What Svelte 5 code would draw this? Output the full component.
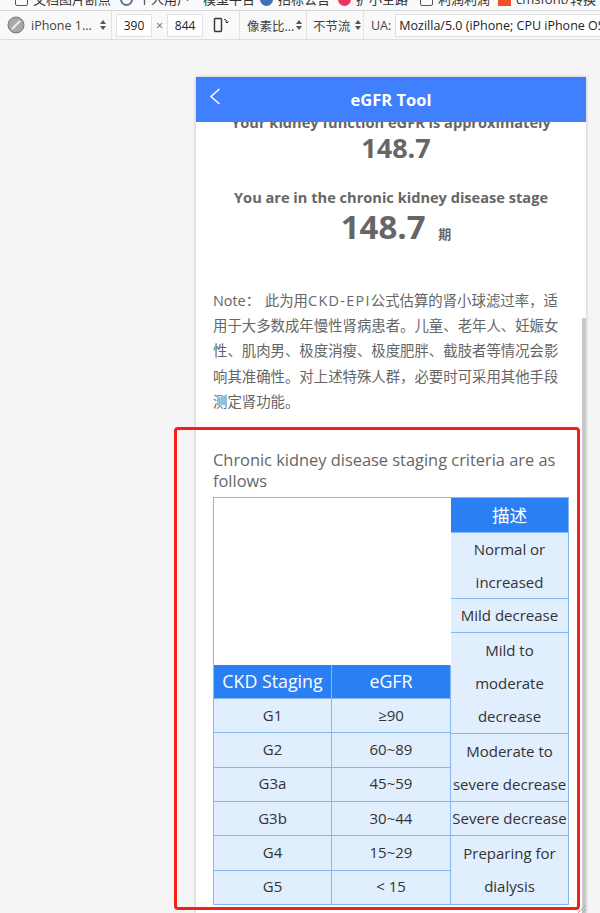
<script>
  const stages = [
    ['G1', '≥90'],
    ['G2', '60~89'],
    ['G3a', '45~59'],
    ['G3b', '30~44'],
    ['G4', '15~29'],
    ['G5', '< 15']
  ]

  const descriptions = [
    { text: 'Normal or increased', height: 66 },
    { text: 'Mild decrease', height: 34 },
    { text: 'Mild to moderate decrease', height: 101 },
    { text: 'Moderate to severe decrease', height: 68 },
    { text: 'Severe decrease', height: 34 },
    { text: 'Preparing for dialysis', height: 68 }
  ]

  const bookmarks = [
    { text: '文档图片断点', icon: 'rect', width: 105 },
    { text: '个人用户', icon: 'ring', width: 78 },
    { text: '模型平台', icon: 'none', width: 62 },
    { text: '招标公告', icon: 'blue', width: 78 },
    { text: '扩小空路', icon: 'pink', width: 82 },
    { text: '利润利润', icon: 'rect', width: 78 },
    { text: 'cmsfont/转换', icon: 'orange', width: 100 }
  ]
</script>

<div class="page">
  <div class="bookmarks">
    {#each bookmarks as mark}
      <span class="bookmark" style="width: {mark.width}px"><i class="mark {mark.icon}"></i>{mark.text}</span>
    {/each}
  </div>

  <div class="toolbar">
    <div class="group device">
      <svg class="no-icon" width="18" height="18" viewBox="0 0 18 18">
        <circle cx="9" cy="9" r="8" fill="#a8a8a8" stroke="#777" stroke-width="1" />
        <path d="M5 13 13 5" stroke="#eee" stroke-width="2" />
      </svg>
      <span class="label">iPhone 1...</span>
      <span class="updown"></span>
    </div>
    <div class="group size">
      <span class="box">390</span>
      <span class="times">×</span>
      <span class="box">844</span>
      <svg class="rotate" width="18" height="18" viewBox="0 0 18 18" fill="none" stroke="#333">
        <rect x="1.5" y="2.5" width="7" height="13" rx="1" stroke-width="1.4" />
        <path d="M11 3.5c2 0 3 .8 3 3M12.5 5.5l1.5 1.5 1.5-1.5" stroke-width="1" />
      </svg>
    </div>
    <div class="group pixel">
      <span class="label">像素比...</span>
      <span class="updown"></span>
    </div>
    <div class="group throttle">
      <span class="label">不节流</span>
      <span class="updown"></span>
    </div>
    <div class="group ua">
      <span class="label">UA:</span>
      <span class="ua-box">Mozilla/5.0 (iPhone; CPU iPhone OS 16_6 like Mac OS X)</span>
    </div>
  </div>

  <div class="phone">
    <header class="app-header">
      <svg class="back" width="12" height="20" viewBox="0 0 12 20" fill="none" stroke="#fff" stroke-width="1.5">
        <path d="M10.5 2 2 9.5 10.5 17" />
      </svg>
      <h1>eGFR Tool</h1>
    </header>

    <div class="viewport">
      <main class="content">
        <div class="result">
          <p class="result-label">Your kidney function eGFR is approximately</p>
          <p class="value">148.7</p>
          <p class="result-label second">You are in the chronic kidney disease stage</p>
          <p class="value large">148.7 <small>期</small></p>
        </div>

        <p class="note"><span class="note-tag">Note：</span> 此为用<span class="wide">CKD-EPI</span>公式估算的肾小球滤过率，适用于大多数成年慢性肾病患者。儿童、老年人、妊娠女性、肌肉男、极度消瘦、极度肥胖、截肢者等情况会影响其准确性。对上述特殊人群，必要时可采用其他手段测定肾功能。</p>

        <h2>Chronic kidney disease staging criteria are as follows</h2>

        <div class="table">
          <div class="stages">
            <div class="row head">
              <div class="cell">CKD Staging</div>
              <div class="cell">eGFR</div>
            </div>
            {#each stages as [stage, range]}
              <div class="row">
                <div class="cell">{stage}</div>
                <div class="cell">{range}</div>
              </div>
            {/each}
          </div>
          <div class="descriptions">
            <div class="desc head">描述</div>
            {#each descriptions as item}
              <div class="desc" style="height: {item.height}px">{item.text}</div>
            {/each}
          </div>
        </div>
      </main>
      <div class="scrollbar"></div>
    </div>
  </div>

  <div class="highlight"></div>

  <svg class="grip" width="8" height="8" viewBox="0 0 8 8" stroke="#aaa" stroke-width="1">
    <path d="M0 8 8 0M4 8l4-4" />
  </svg>
</div>

<style>
  :global(body) {
    margin: 0;
    background: #f5f5f5;
  }

  .page {
    position: relative;
    width: 600px;
    height: 913px;
    overflow: hidden;
    background: #f5f5f5;
    font-family: "Open Sans", "Noto Sans CJK SC", sans-serif;
    color: #333;
  }

  .bookmarks {
    display: flex;
    height: 11px;
    padding-left: 15px;
    overflow: hidden;
    background: #fafafc;
    border-bottom: 1px solid #d8d8d8;
    font-size: 13px;
    line-height: 6px;
    white-space: nowrap;
    box-sizing: border-box;
    color: #333;
  }

  .bookmark {
    display: flex;
    flex: none;
    gap: 5px;
    margin-top: -4px;
  }

  .mark {
    display: block;
    flex: none;
    width: 13px;
    height: 13px;
    margin-top: -3px;
    box-sizing: border-box;
  }

  .mark.rect {
    border: 1px solid #555;
    border-radius: 2px;
  }

  .mark.ring {
    border: 2px solid #5c7a8c;
    border-radius: 50%;
  }

  .mark.none {
    width: 0;
  }

  .mark.blue {
    border-radius: 50%;
    background: #3f6fb5;
  }

  .mark.pink {
    border-radius: 50%;
    background: #f0325a;
  }

  .mark.orange {
    background: #f0502a;
  }

  .toolbar {
    display: flex;
    align-items: center;
    height: 29px;
    padding-left: 2px;
    background: #f9f9f9;
    border-bottom: 1px solid #ddd;
    box-sizing: border-box;
    font-size: 12.5px;
    color: #444;
  }

  .group {
    display: flex;
    align-items: center;
    height: 100%;
    padding: 0 5px;
    border-right: 1px solid #e2e2e2;
    white-space: nowrap;
    box-sizing: border-box;
  }

  .device {
    gap: 6px;
    width: 110px;
    padding-left: 5px;
  }

  .device .updown {
    margin-left: 2px;
  }

  .size {
    width: 128px;
    padding-left: 4px;
    gap: 4px;
  }

  .pixel {
    width: 67px;
    padding-left: 7px;
    gap: 2px;
  }

  .throttle {
    width: 57px;
    padding-left: 6px;
    gap: 4px;
  }

  .ua {
    flex: 1;
    gap: 4px;
    padding-left: 7px;
    border: none;
    overflow: hidden;
  }

  .box, .ua-box {
    background: #fff;
    border: 1px solid #e2e2e2;
    height: 21px;
    line-height: 21px;
    padding: 0 5px;
    color: #222;
  }

  .box {
    width: 24px;
    text-align: center;
    font-size: 12px;
  }

  .ua-box {
    padding-left: 3px;
    font-size: 12.5px;
  }

  .times {
    color: #666;
  }

  .rotate {
    margin-left: 6px;
  }

  .updown {
    position: relative;
    display: block;
    flex: none;
    width: 6px;
    height: 10px;
  }

  .updown::before, .updown::after {
    content: "";
    position: absolute;
    left: 0;
    border-left: 3px solid transparent;
    border-right: 3px solid transparent;
  }

  .updown::before {
    top: 0;
    border-bottom: 4px solid #555;
  }

  .updown::after {
    bottom: 0;
    border-top: 4px solid #555;
  }

  .phone {
    display: flex;
    flex-direction: column;
    width: 390px;
    height: 836px;
    margin: 37px 0 0 196px;
    background: #fff;
    box-shadow: 0 0 3px rgba(0, 0, 0, 0.25);
  }

  .app-header {
    position: relative;
    z-index: 1;
    flex: none;
    display: flex;
    align-items: center;
    justify-content: center;
    height: 45px;
    background: #4080ff;
    color: #fff;
  }

  .app-header h1 {
    margin: 0;
    font-size: 16.5px;
    font-weight: 700;
  }

  .back {
    position: absolute;
    left: 13px;
    top: 10px;
  }

  .viewport {
    position: relative;
    flex: 1;
    overflow: hidden;
  }

  .content {
    margin-top: -10px;
    padding: 0 17px;
  }

  .result {
    text-align: center;
    color: #666;
  }

  .result p {
    margin: 0;
  }

  .result-label {
    font-size: 14.6px;
    font-weight: 700;
    line-height: 20px;
    white-space: nowrap;
  }

  .second {
    margin-top: 23px !important;
  }

  .value {
    padding-left: 10px;
    font-size: 27px;
    font-weight: 700;
    line-height: 32px;
  }

  .large {
    margin-top: 1px !important;
    font-size: 33px;
    line-height: 38px;
  }

  .large small {
    margin-left: 4px;
    font-size: 13px;
  }

  .note {
    margin: 35px 0 0;
    font-size: 14.4px;
    line-height: 25.2px;
    color: #666;
  }

  .note-tag {
    margin-right: 1px;
  }

  .wide {
    letter-spacing: 1.3px;
  }

  h2 {
    margin: 35px 0 0;
    font-size: 16.4px;
    font-weight: 400;
    line-height: 21px;
    color: #666;
  }

  .table {
    display: flex;
    width: 356px;
    margin-top: 6px;
    border: 1px solid #85b7f7;
    box-sizing: border-box;
    font-size: 15px;
    color: #333;
    text-align: center;
    background: #fff;
  }

  .stages {
    display: flex;
    flex-direction: column;
    justify-content: flex-end;
    width: 237px;
    flex: none;
  }

  .row {
    display: grid;
    grid-template-columns: 118px 119px;
    height: 34.33px;
    border-top: 1px solid #85b7f7;
    box-sizing: border-box;
    background: #e1eefd;
  }

  .row .cell {
    display: flex;
    align-items: center;
    justify-content: center;
    padding-bottom: 2px;
    border-right: 1px solid #85b7f7;
  }

  .row.head {
    height: 33px;
    border-top: none;
    background: #2a80f3;
    color: #fff;
    font-size: 17.8px;
  }

  .descriptions {
    flex: 1;
    display: flex;
    flex-direction: column;
    min-width: 0;
  }

  .desc {
    display: flex;
    align-items: center;
    justify-content: center;
    line-height: 33px;
    border-bottom: 1px solid #85b7f7;
    background: #e1eefd;
    box-sizing: border-box;
  }

  .desc:last-child {
    border-bottom: none;
  }

  .desc.head {
    height: 35px;
    background: #2a80f3;
    color: #fff;
    font-size: 17.6px;
  }

  .scrollbar {
    position: absolute;
    top: 196px;
    right: 0;
    width: 4px;
    bottom: 0;
    background: #c8c8c8;
  }

  .highlight {
    position: absolute;
    left: 174px;
    top: 427px;
    width: 406px;
    height: 483px;
    border: 3px solid #f3201a;
    border-radius: 4px;
    box-sizing: border-box;
    pointer-events: none;
  }

  .grip {
    position: absolute;
    left: 578px;
    top: 905px;
  }
</style>
